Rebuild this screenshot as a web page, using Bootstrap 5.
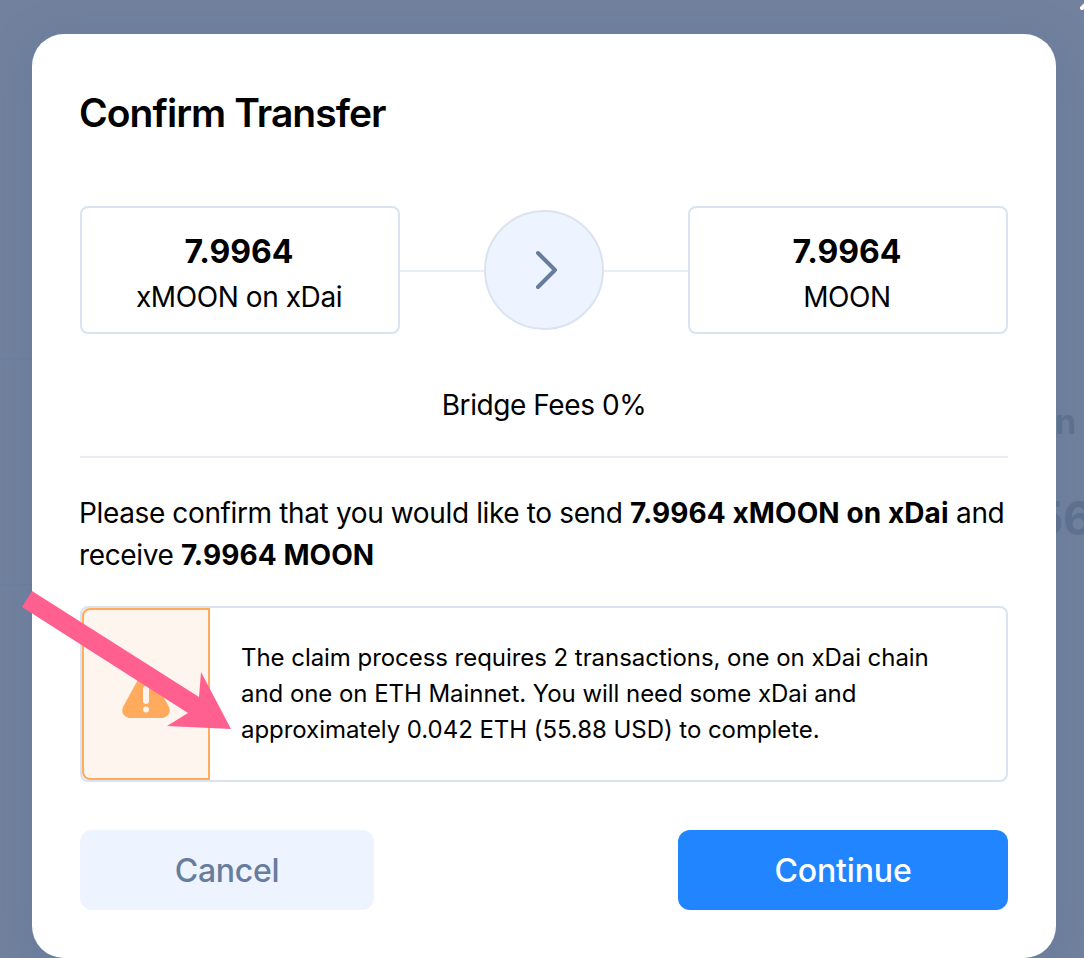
<!DOCTYPE html>
<html lang="en">
<head>
<meta charset="utf-8">
<meta name="viewport" content="width=device-width, initial-scale=1">
<title>Confirm Transfer</title>
<link href="https://cdn.jsdelivr.net/npm/bootstrap@5.3.0/dist/css/bootstrap.min.css" rel="stylesheet">
<style>
  body { font-family: Inter, sans-serif; color: #000; background: #71819e; height: 958px; font-size: 28px; line-height: 42px; letter-spacing: -.42px; }
  .backdrop { height: 958px; padding: 34px 28px 0 32px; background: #71819e; }
  .dialog { height: 924px; padding: 48px; background: #fff; border-radius: 32px; box-shadow: 0 8px 40px rgba(80, 115, 150, .35); }
  .title { font-size: 39px; line-height: 60px; font-weight: 600; letter-spacing: -.95px; margin: 1px 0 63px -1px; }
  .amount { width: 320px; height: 128px; padding-top: 5px; border: 2px solid #dae3f0; border-radius: 8px; }
  .amount-value { font-size: 32px; line-height: 48px; font-weight: 700; letter-spacing: 0; margin-left: -2px; }
  .amount-unit { margin-left: -2px; }
  .wire { height: 2px; background: #e8eef9; margin-top: 2px; }
  .disc { width: 120px; height: 120px; border: 2px solid #dae3f0; background: #edf4ff; padding-left: 4px; }
  .fees { margin-top: 50px; height: 74px; border-bottom: 2px solid #e8ebf7; }
  .question { margin: 34px -8px 30px -1px; letter-spacing: -.37px; white-space: nowrap; }
  .question b { font-weight: 700; letter-spacing: .08px; }
  .notice { height: 176px; border: 2px solid #dae3f0; border-radius: 8px; }
  .notice-icon { width: 128px; border: 2px solid #ffaa5c; border-radius: 8px 0 0 8px; background: #fff5ef; }
  .notice-text { font-size: 24px; line-height: 36px; letter-spacing: -.05px; padding-left: 31px; white-space: nowrap; }
  .action { height: 80px; border: 0; border-radius: 12px; font-size: 32px; font-weight: 500; padding: 2px 0 0; }
  .action-cancel, .action-cancel:hover { width: 294px; background: #edf4ff; color: #687d9d; letter-spacing: -.3px; }
  .action-go, .action-go:hover { width: 330px; background: #2185ff; color: #fff; letter-spacing: -.15px; }
  .behind { color: #5f718f; font-weight: 700; line-height: 1; white-space: nowrap; }
  .behind-label { left: 1055px; top: 405px; font-size: 34px; }
  .behind-value { left: 1034px; top: 495px; font-size: 46px; }
  .rule-a { top: 358px; } .rule-b { top: 584px; }
  .rule { left: 0; width: 32px; height: 2px; background: #687d9d; opacity: .5; }
</style>
</head>
<body class="overflow-hidden position-relative">
<div class="backdrop position-relative overflow-hidden">
  <i class="rule rule-a position-absolute"></i>
  <i class="rule rule-b position-absolute"></i>
  <svg class="position-absolute top-0 end-0" width="6" height="12" viewBox="0 0 6 12"><path d="M4 8 10 2" stroke="#fff" stroke-width="4" stroke-linecap="round"/></svg>
  <span class="behind behind-label position-absolute">n</span>
  <span class="behind behind-value position-absolute">56</span>
  <main class="dialog position-relative">
    <h1 class="title">Confirm Transfer</h1>
    <div class="d-flex align-items-center">
      <div class="amount d-flex flex-column justify-content-center text-center">
        <div class="amount-value">7.9964</div>
        <div class="amount-unit">xMOON on xDai</div>
      </div>
      <div class="wire flex-fill"></div>
      <div class="disc rounded-circle d-flex align-items-center justify-content-center">
        <svg width="24" height="40" viewBox="0 0 24 40" fill="none"><path d="M4 3 21 20 4 37" stroke="#687d9d" stroke-width="4" stroke-linecap="round" stroke-linejoin="round"/></svg>
      </div>
      <div class="wire flex-fill"></div>
      <div class="amount d-flex flex-column justify-content-center text-center">
        <div class="amount-value">7.9964</div>
        <div class="amount-unit">MOON</div>
      </div>
    </div>
    <div class="fees text-center">Bridge Fees 0%</div>
    <p class="question">Please confirm that you would like to send <b>7.9964 xMOON on xDai</b> and<br>receive <b>7.9964 MOON</b></p>
    <div class="notice d-flex">
      <div class="notice-icon d-flex align-items-center justify-content-center flex-shrink-0">
        <svg width="48" height="48" viewBox="0 0 48 48"><path d="M18 6q6-9 12 0l17 31q3 8-6 11H7q-9-3-6-11Z" fill="#ffaa5c"/><path d="M24 19V31" stroke="#fff5ef" stroke-width="6" stroke-linecap="round"/><circle cx="24" cy="39.5" r="3" fill="#fff5ef"/></svg>
      </div>
      <div class="notice-text align-self-center">The claim process requires 2 transactions, one on xDai chain<br>and one on ETH Mainnet. You will need some xDai and<br>approximately 0.042 ETH (55.88 USD) to complete.</div>
    </div>
    <div class="d-flex justify-content-between mt-5">
      <button class="btn action action-cancel" type="button">Cancel</button>
      <button class="btn action action-go" type="button">Continue</button>
    </div>
  </main>
  <svg class="position-absolute top-0 start-0 pe-none" width="240" height="760" viewBox="0 0 240 760"><path d="M32 591 199 697 201 672 231 729 167 726 188 713 22 607Z" fill="#ff6090"/></svg>
</div>
<script src="https://cdn.jsdelivr.net/npm/bootstrap@5.3.0/dist/js/bootstrap.bundle.min.js"></script>
</body>
</html>
